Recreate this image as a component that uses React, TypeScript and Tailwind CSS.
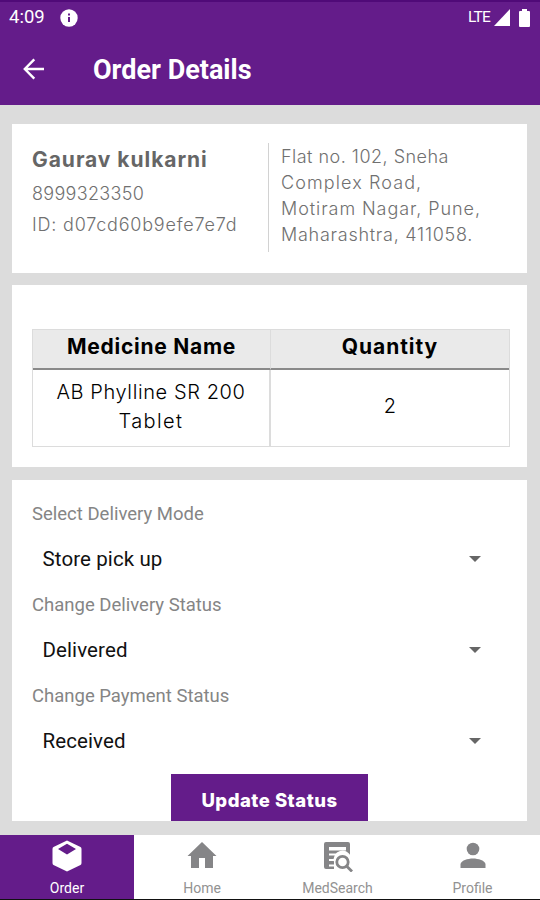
import type { ReactNode } from "react"
import { clsx } from "clsx"

const customer = {
  name: "Gaurav kulkarni",
  phone: "8999323350",
  id: "d07cd60b9efe7e7d",
}

const address = [
  { text: "Flat no. 102, Sneha", className: "tracking-[0.48px]" },
  { text: "Complex Road,", className: "tracking-[1.1px]" },
  { text: "Motiram Nagar, Pune,", className: "tracking-[0.93px]" },
  { text: "Maharashtra, 411058.", className: "tracking-[0.74px]" },
]

const fields = [
  { label: "Select Delivery Mode", value: "Store pick up" },
  { label: "Change Delivery Status", value: "Delivered" },
  { label: "Change Payment Status", value: "Received" },
]

function StatusBar() {
  return (
    <div className="flex h-[33px] items-center justify-between border-t-2 border-[#500a78] pl-[9px] pr-[10px] font-[Roboto,sans-serif]">
      <div className="flex items-center gap-[15px]">
        <span className="text-[18.5px] leading-none">4:09</span>
        <svg className="size-[18px]" viewBox="0 0 18 18">
          <circle cx="9" cy="9" r="8.7" fill="white" />
          <path d="M8 4.5h2v2H8zM8 8h2v5H8z" fill="#641c8a" />
        </svg>
      </div>
      <div className="flex items-center">
        <span className="text-[15.5px] leading-none tracking-[-0.8px]">LTE</span>
        <svg className="ml-[4px] h-[17px] w-[16px]" viewBox="0 0 16 17">
          <path d="M16 0v17H0z" fill="white" />
        </svg>
        <svg className="ml-[9px] h-[18px] w-[11px]" viewBox="0 0 11 18">
          <path d="M3 0h5v2h2q1 0 1 1v14q0 1-1 1H1q-1 0-1-1V3q0-1 1-1h2z" fill="white" />
        </svg>
      </div>
    </div>
  )
}

function Header() {
  return (
    <header className="h-[105px] shrink-0 bg-[#641c8a] text-white">
      <StatusBar />
      <div className="flex h-[72px] items-center pl-[23px]">
        <svg className="size-[22px]" viewBox="0 0 22 22" fill="none" stroke="white" strokeWidth="2.4">
          <path d="M21 11H2M11.3 1.3 1.8 11l9.5 9.7" />
        </svg>
        <h1 className="ml-[48px] pt-[2px] font-[Roboto,sans-serif] text-[27px] font-bold leading-none">
          Order Details
        </h1>
      </div>
    </header>
  )
}

function CustomerCard() {
  return (
    <section className="flex h-[149px] shrink-0 bg-white pl-5 pt-[19px] font-[Inter,sans-serif] text-[#707070]">
      <div className="h-[109px] w-[237px] border-r border-[#d2d2d2]">
        <h2 className="mt-[3px] text-[21px] font-bold leading-[28px] tracking-[0.95px] text-[#666]">
          {customer.name}
        </h2>
        <p className="mt-[4px] text-[18px] font-light leading-[31px] tracking-[0.3px]">{customer.phone}</p>
        <p className="whitespace-nowrap text-[18px] font-light leading-[31px] tracking-[0.8px]">ID: {customer.id}</p>
      </div>
      <div className="pl-[12px] pt-px text-[18px] font-light leading-[26px]">
        {address.map((line) => (
          <p key={line.text} className={line.className}>
            {line.text}
          </p>
        ))}
      </div>
    </section>
  )
}

function MedicineCard() {
  return (
    <section className="mt-[12px] h-[182px] shrink-0 bg-white pl-5 pt-[44px] font-[Inter,sans-serif] text-black">
      <div className="grid h-[118px] w-[478px] grid-cols-2 grid-rows-[40px_1fr] border border-[#dcdcdc] text-center">
        <div className="border-b-2 border-r border-b-[#8a8a8a] border-r-[#dcdcdc] bg-[#eaeaea] text-[21px] font-bold leading-[33px] tracking-[0.75px]">
          Medicine Name
        </div>
        <div className="border-b-2 border-b-[#8a8a8a] bg-[#eaeaea] text-[21px] font-bold leading-[33px] tracking-[0.95px]">
          Quantity
        </div>
        <div className="flex flex-col items-center justify-center border-r-2 border-[#dcdcdc] pb-[3px] text-[20px] leading-[29px] font-light">
          <span className="tracking-[0.6px]">AB Phylline SR 200</span>
          <span className="tracking-[1.4px]">Tablet</span>
        </div>
        <div className="flex items-center justify-center pb-[4px] text-[20px] font-light">2</div>
      </div>
    </section>
  )
}

function SelectField({ label, value }: { label: string; value: string }) {
  return (
    <div className="h-[91.5px] font-[Roboto,sans-serif]">
      <label className="block text-[18.5px] leading-[26px] text-[#858585]">{label}</label>
      <div className="flex h-[65px] items-center justify-between pl-[10.5px] pr-[26px]">
        <span className="text-[20.5px] tracking-[0.1px] text-[#111]">{value}</span>
        <svg className="mb-[2px] h-[6px] w-[12px]" viewBox="0 0 12 6">
          <path d="M0 0h12L6 6z" fill="#666" />
        </svg>
      </div>
    </div>
  )
}

function StatusCard() {
  return (
    <section className="mt-[13px] flex h-[341px] shrink-0 flex-col overflow-hidden bg-white px-5 pt-[21px]">
      {fields.map((field) => (
        <SelectField key={field.label} {...field} />
      ))}
      <button className="ml-[139px] mt-[-0.5px] h-[60px] w-[197px] shrink-0 bg-[#641c8a] pb-[6px] font-[Inter,sans-serif] text-[18.5px] font-extrabold tracking-[0.5px] text-white">
        Update Status
      </button>
    </section>
  )
}

function NavItem({ label, active, children }: { label: string; active?: boolean; children: ReactNode }) {
  return (
    <div
      className={clsx(
        "flex flex-col items-center pt-[5px] font-[Roboto,sans-serif]",
        active ? "bg-[#641c8a] text-white" : "bg-white text-[#858587]",
      )}
    >
      <svg className="size-8" viewBox="0 0 32 32" fill="currentColor">
        {children}
      </svg>
      <span className={clsx("mt-[8px] text-[14px] leading-[16px]", !active && "text-[#929292]")}>{label}</span>
    </div>
  )
}

function BottomNav() {
  return (
    <nav className="grid h-[65px] shrink-0 grid-cols-[134px_136px_135px_135px] border-b border-[#111]">
      <NavItem label="Order" active>
        <path
          fillRule="evenodd"
          d="M16 0.5 29.5 7Q30.5 7.6 30.5 9v14q0 1.4-1 2L16 31.5 2.5 25Q1.5 24.4 1.5 23V9Q1.5 7.6 2.5 7ZM16 3.8 7 9 16 14.5 25 9Z"
        />
      </NavItem>
      <NavItem label="Home">
        <path d="M16 2 1.5 16H5v12h8V18h6v10h8V16h3.5z" />
      </NavItem>
      <NavItem label="MedSearch">
        <path
          fillRule="evenodd"
          d="M4 2h22q2 0 2 2v25H4q-2 0-2-2V4q0-2 2-2ZM7 7v3.5h17V7ZM7 13.500v2h9V13.500ZM7 19v2h6V19ZM7 24.500v2h6V24.500Z"
        />
        <path d="M12 32V22a8.500 8.500 0 0 1 17-5v15z" fill="white" />
        <circle cx="20.500" cy="22" r="5.700" fill="none" stroke="currentColor" strokeWidth="2.800" />
        <path d="m24.500 26 5.500 5.500" stroke="currentColor" strokeWidth="2.800" />
      </NavItem>
      <NavItem label="Profile">
        <circle cx="16" cy="9" r="6.3" />
        <path d="M3.5 28v-3.500C3.500 20.500 11 18.500 16 18.500s12.500 2 12.500 6V28z" />
      </NavItem>
    </nav>
  )
}

export default function App() {
  return (
    <div className="flex h-[900px] w-[540px] flex-col overflow-hidden bg-[#dcdcdc]">
      <Header />
      <main className="flex h-[730px] shrink-0 flex-col pl-[12px] pr-[13px] pt-[19px]">
        <CustomerCard />
        <MedicineCard />
        <StatusCard />
      </main>
      <BottomNav />
    </div>
  )
}
